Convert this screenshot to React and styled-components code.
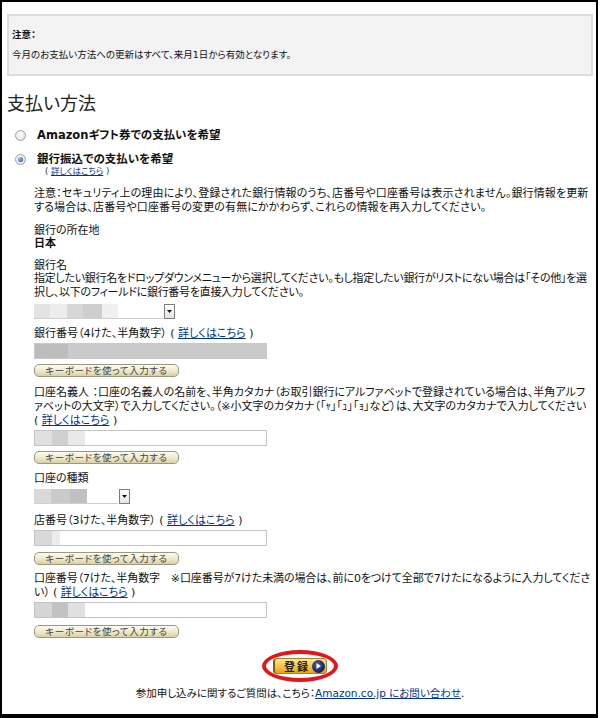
import styled, { createGlobalStyle } from "styled-components"

const GlobalStyle = createGlobalStyle`
  html, body {
    margin: 0;
    padding: 0;
    background: #fff;
  }
  body {
    font-family: "DejaVu Sans", "Noto Sans CJK JP", sans-serif;
    font-feature-settings: "palt";
    color: #111;
  }
`

const Frame = styled.div`
  box-sizing: border-box;
  width: 598px;
  height: 718px;
  border: 2px solid #000;
  border-bottom-width: 4px;
  padding: 12px 3px 0 5px;
  overflow: hidden;
  font-size: 11px;
`

const Notice = styled.div`
  box-sizing: border-box;
  height: 62px;
  background: #f3f3f3;
  border: 2px solid #dcdcdc;
  padding: 13px 0 0 3px;
  font-size: 9.5px;
  line-height: 12px;
`

const NoticeTitle = styled.div`
  font-weight: bold;
`

const NoticeText = styled.div`
  margin-top: 8px;
`

const Heading = styled.h2`
  margin: 17px 0 0;
  font-size: 18px;
  line-height: 22px;
  font-weight: normal;
  color: #222;
`

const RadioRow = styled.div`
  display: flex;
  align-items: center;
  gap: 11px;
  margin-top: ${(p) => p.$top}px;
  padding-left: 8px;
  font-size: 11.5px;
  line-height: 14px;
  font-weight: bold;
`

const Radio = styled.span`
  box-sizing: border-box;
  width: 11px;
  height: 11px;
  border-radius: 50%;
  border: 1px solid #a3a3a3;
  background: radial-gradient(circle at 40% 35%, #ffffff, #d9d9d9);
  display: flex;
  align-items: center;
  justify-content: center;

  &::after {
    content: "";
    width: 5px;
    height: 5px;
    border-radius: 50%;
    background: ${(p) =>
      p.$checked ? "radial-gradient(circle at 35% 35%, #9cc2ff, #173f9c)" : "transparent"};
  }
`

const SmallLink = styled.div`
  padding-left: 38px;
  font-size: 8.5px;
  line-height: 10px;
  color: #333;
`

const Link = styled.a`
  color: #003399;
  text-decoration: underline;
`

const Section = styled.div`
  padding-left: 27px;
`

const Para = styled.div`
  margin-top: ${(p) => p.$top || 0}px;
  line-height: ${(p) => p.$lh || 13}px;
  letter-spacing: ${(p) => p.$ls || 0}px;
  font-weight: ${(p) => (p.$bold ? "bold" : "normal")};
  white-space: nowrap;
`

const Field = styled.div`
  margin-top: ${(p) => p.$top}px;
`

const TextBox = styled.div`
  box-sizing: border-box;
  width: 233px;
  height: 16px;
  margin-top: ${(p) => p.$top ?? 3}px;
  border: 1px solid ${(p) => (p.$filled ? "#c9c9c9" : "#c4c4c4")};
  background: ${(p) => p.$bg};
`

const Select = styled.div`
  box-sizing: border-box;
  display: flex;
  width: ${(p) => p.$w}px;
  height: 15px;
  margin-top: 4px;
`

const SelectFace = styled.div`
  flex: 1;
  border-bottom: 1px solid #cfcfcf;
  background: ${(p) => p.$bg};
`

const ArrowBox = styled.div`
  box-sizing: border-box;
  width: 11px;
  margin-left: 1px;
  border: 1px solid #7d7d7d;
  background: linear-gradient(#ffffff, #e4e4e4);
  display: flex;
  align-items: center;
  justify-content: center;
`

const KeyButton = styled.button`
  box-sizing: border-box;
  display: block;
  width: 145px;
  height: 13px;
  margin-top: ${(p) => p.$top ?? 5}px;
  padding: 0;
  border: 1px solid #9b987c;
  border-radius: 5px;
  background: linear-gradient(#fdfcf3, #ece6c6 60%, #d8d0a6);
  font-family: inherit;
  font-feature-settings: "palt";
  font-size: 9.5px;
  line-height: 11px;
  letter-spacing: 0.6px;
  color: #444;
`

const SubmitRow = styled.div`
  display: flex;
  justify-content: center;
  margin-top: 12px;
`

const RedRing = styled.div`
  box-sizing: border-box;
  width: 76px;
  height: 32px;
  border: 4px solid #e3161b;
  border-radius: 50%;
  display: flex;
  align-items: center;
  justify-content: center;
`

const SubmitButton = styled.button`
  box-sizing: border-box;
  display: flex;
  align-items: center;
  justify-content: space-between;
  width: 54px;
  height: 16px;
  padding: 0 1px 0 9px;
  border: 1px solid #a7811f;
  border-left: 2px solid #7a5d12;
  border-radius: 4px;
  background: linear-gradient(#fde7a0, #f6c747 50%, #e6a51c);
  font-family: inherit;
  font-feature-settings: "palt";
  font-size: 11px;
  font-weight: bold;
  letter-spacing: 2px;
  color: #222;
`

const GoCircle = styled.span`
  width: 13px;
  height: 13px;
  border-radius: 50%;
  background: radial-gradient(circle at 40% 35%, #4a5c9e, #142159 70%);
  display: flex;
  align-items: center;
  justify-content: center;
`

const Footer = styled.div`
  margin-top: 4px;
  text-align: center;
  line-height: 14px;
  font-size: 10.5px;
`

const mosaic = (blocks, rest = "#fff") => {
  let x = 0
  const stops = blocks.map(([w, c]) => {
    const s = `${c} ${x}px ${x + w}px`
    x += w
    return s
  })
  return `linear-gradient(to right, ${stops.join(", ")}, ${rest} ${x}px)`
}

function Arrow() {
  return (
    <svg width="5" height="3" viewBox="0 0 5 3">
      <polygon points="0,0 5,0 2.5,3" fill="#111" />
    </svg>
  )
}

function DropDown({ w, blocks }) {
  return (
    <Select $w={w}>
      <SelectFace $bg={mosaic(blocks)} />
      <ArrowBox>
        <Arrow />
      </ArrowBox>
    </Select>
  )
}

function Details() {
  return (
    <>
      ( <Link>詳しくはこちら</Link> )
    </>
  )
}

export default function App() {
  return (
    <>
      <GlobalStyle />
      <Frame>
        <Notice>
          <NoticeTitle>注意：</NoticeTitle>
          <NoticeText>今月のお支払い方法への更新はすべて、来月1日から有効となります。</NoticeText>
        </Notice>

        <Heading>支払い方法</Heading>

        <RadioRow $top={13}>
          <Radio />
          <span>Amazonギフト券での支払いを希望</span>
        </RadioRow>
        <RadioRow $top={10}>
          <Radio $checked />
          <span>銀行振込での支払いを希望</span>
        </RadioRow>
        <SmallLink>
          <Details />
        </SmallLink>

        <Section>
          <Para $top={11} $lh={14} $ls={0.12}>
            注意：セキュリティ上の理由により、登録された銀行情報のうち、店番号や口座番号は表示されません。銀行情報を更新
            <br />
            する場合は、店番号や口座番号の変更の有無にかかわらず、これらの情報を再入力してください。
          </Para>

          <Para $top={9}>銀行の所在地</Para>
          <Para $bold>日本</Para>

          <Field $top={9}>
            <Para>銀行名</Para>
            <Para $lh={14} $ls={-0.28}>
              指定したい銀行名をドロップダウンメニューから選択してください。もし指定したい銀行がリストにない場合は「その他」を選
              <br />
              択し、以下のフィールドに銀行番号を直接入力してください。
            </Para>
            <DropDown
              w={141}
              blocks={[
                [16, "#e3e3e3"],
                [17, "#ededed"],
                [16, "#d7d7d7"],
                [19, "#cecece"],
                [16, "#f0f0f0"],
              ]}
            />
          </Field>

          <Field $top={8}>
            <Para>
              銀行番号（4けた、半角数字） <Details />
            </Para>
            <TextBox $filled $bg={mosaic([[33, "#bcbcbc"]], "#cacaca")} />
            <KeyButton>キーボードを使って入力する</KeyButton>
          </Field>

          <Field $top={9}>
            <Para $lh={14}>
              口座名義人 ：口座の名義人の名前を、半角カタカナ（お取引銀行にアルファベットで登録されている場合は、半角アルフ
              <br />
              ァベットの大文字）で入力してください。（※小文字のカタカナ（「ｬ」「ｭ」「ｮ」など）は、大文字のカタカナで入力してください
              <br />
              <Details />
            </Para>
            <TextBox
              $top={2}
              $bg={mosaic([
                [17, "#e0e0e0"],
                [16, "#d0d0d0"],
                [17, "#e9e9e9"],
              ])}
            />
            <KeyButton>キーボードを使って入力する</KeyButton>
          </Field>

          <Field $top={8}>
            <Para>口座の種類</Para>
            <DropDown
              w={96}
              blocks={[
                [17, "#d9d9d9"],
                [19, "#cacaca"],
                [17, "#c0c0c0"],
              ]}
            />
          </Field>

          <Field $top={10}>
            <Para>
              店番号（3けた、半角数字） <Details />
            </Para>
            <TextBox
              $bg={mosaic([
                [17, "#d9d9d9"],
                [8, "#ececec"],
              ])}
            />
            <KeyButton $top={6}>キーボードを使って入力する</KeyButton>
          </Field>

          <Field $top={7}>
            <Para $lh={14} $ls={-0.1}>
              口座番号（7けた、半角数字　※口座番号が7けた未満の場合は、前に0をつけて全部で7けたになるように入力してくださ
              <br />
              い） <Details />
            </Para>
            <TextBox
              $top={2}
              $bg={mosaic([
                [17, "#d6d6d6"],
                [16, "#c2c2c2"],
                [17, "#e0e0e0"],
              ])}
            />
            <KeyButton $top={7}>キーボードを使って入力する</KeyButton>
          </Field>
        </Section>

        <SubmitRow>
          <RedRing>
            <SubmitButton>
              登録
              <GoCircle>
                <svg width="5" height="6" viewBox="0 0 5 6">
                  <polygon points="0.5,0 5,3 0.5,6" fill="#fff" />
                </svg>
              </GoCircle>
            </SubmitButton>
          </RedRing>
        </SubmitRow>

        <Footer>
          参加申し込みに関するご質問は、こちら：<Link>Amazon.co.jp にお問い合わせ</Link>.
        </Footer>
      </Frame>
    </>
  )
}
